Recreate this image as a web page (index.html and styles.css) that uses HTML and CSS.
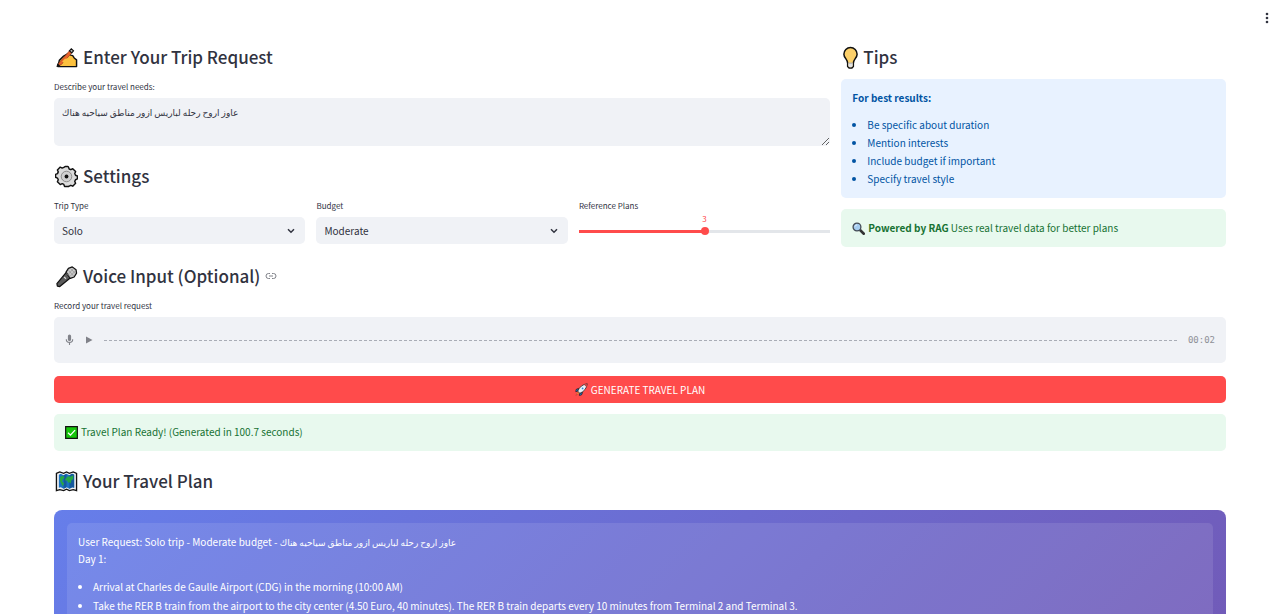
FILE: index.html
```html
<!DOCTYPE html>
<html lang="en">
<head>
<meta charset="utf-8">
<meta name="viewport" content="width=device-width, initial-scale=1">
<title>Travel Planner</title>
<link rel="stylesheet" href="styles.css">
</head>
<body>
<header class="topbar">
  <button class="menu-button" type="button" aria-label="Main menu">
    <svg class="menu-icon" viewBox="0 0 4 12"><circle cx="2" cy="2" r="1.3"/><circle cx="2" cy="6" r="1.3"/><circle cx="2" cy="10" r="1.3"/></svg>
  </button>
</header>
<main class="page">
  <div class="columns">
    <section class="request">
      <h2 class="heading">
        <svg class="emoji" viewBox="0 0 24 24"><path d="M3 21.500 4.500 15 9 10.500 13.500 8l3 1.500 2 .5 1.500 2.500 2.500 2v7z" fill="#fcc13e" stroke="#111" stroke-width="1.500" stroke-linejoin="round"/><path d="M3.500 18.500 15 5l2.500 2.200L6.500 19.500l-3.500 1z" fill="#e8622c" stroke="#8a3a1c" stroke-width=".6"/><path d="m15 5 2-2 2.300 2-1.800 2.200z" fill="#bbb" stroke="#111" stroke-width="1.200"/><path d="m1.500 22 1-4 3.500 3z" fill="#111"/><path d="M8.500 17q3-4 6-2.500" fill="none" stroke="#fcc13e" stroke-width="2.600"/></svg>
        Enter Your Trip Request
      </h2>
      <label class="label" for="needs">Describe your travel needs:</label>
      <textarea class="textarea arabic" id="needs">عاوز اروح رحله لباريس ازور مناطق سياحيه هناك</textarea>

      <h2 class="heading">
        <svg class="emoji" viewBox="0 0 24 24"><path d="m10 2 1-.5h2l1 .5.800 2.200 1.700.700 2-1 3 3-.9 2 .8 1.800 2 .8v3l-2 .9-.8 1.700.9 2-3 3-2-.9-1.700.8L14 22.500h-4l-.8-2.200-1.700-.8-2 .9-3-3 .9-2-.8-1.700-2-.9v-3l2-.8.8-1.800-.9-2 3-3 2 1 1.700-.7z" fill="#dcdcdc" stroke="#111" stroke-width="1.500" stroke-linejoin="round"/><circle cx="12" cy="12" r="5.500" fill="#d0d0d0" stroke="#777" stroke-width=".8"/><circle cx="12" cy="12" r="2" fill="#111"/></svg>
        Settings
      </h2>
      <div class="settings">
        <div class="field">
          <label class="label" for="trip">Trip Type</label>
          <div class="select-wrap">
            <select class="select" id="trip"><option>Solo</option></select>
            <svg class="chevron" viewBox="0 0 8 6"><path d="m1 1.200 3 3 3-3"/></svg>
          </div>
        </div>
        <div class="field">
          <label class="label" for="budget">Budget</label>
          <div class="select-wrap">
            <select class="select" id="budget"><option>Moderate</option></select>
            <svg class="chevron" viewBox="0 0 8 6"><path d="m1 1.200 3 3 3-3"/></svg>
          </div>
        </div>
        <div class="field">
          <label class="label" for="plans">Reference Plans</label>
          <output class="slider-value" for="plans">3</output>
          <input class="slider" id="plans" type="range" min="1" max="5" value="3">
        </div>
      </div>
    </section>

    <aside class="tips">
      <h2 class="heading tips-heading">
        <svg class="emoji bulb" viewBox="0 0 18 24"><path d="M9 1.500A7 7 0 0 0 2 8.500c0 4 4 5.500 4 9.500v3.500l1.500 1.500h3l1.500-1.500V18c0-4 4-5.500 4-9.500a7 7 0 0 0-7-7z" fill="#fcd06a" stroke="#111" stroke-width="1.600"/><path d="M6.700 17.500h4.600v3.700l-1.300 1H8l-1.300-1z" fill="#e4e4e4"/><path d="M6.700 18h4.600" stroke="#999" stroke-width=".8"/></svg>
        Tips
      </h2>
      <div class="notice info">
        <p class="notice-title">For best results:</p>
        <ul class="tip-list">
          <li>Be specific about duration</li>
          <li>Mention interests</li>
          <li>Include budget if important</li>
          <li>Specify travel style</li>
        </ul>
      </div>
      <div class="notice success">
        <svg class="emoji-small" viewBox="0 0 12 12"><path d="m7.200 7.200 3.700 3.600" stroke="#333" stroke-width="2.400" stroke-linecap="round"/><circle cx="4.600" cy="4.600" r="3.600" fill="#a5cdf0" stroke="#444b55" stroke-width="1.200"/><path d="M2.800 4.200q.4-1.400 1.700-1.500" stroke="#fff" stroke-width=".7" fill="none"/></svg>
        <p><strong>Powered by RAG</strong> Uses real travel data for better plans</p>
      </div>
    </aside>
  </div>

  <section class="voice" id="voice">
    <h2 class="heading">
      <svg class="emoji" viewBox="0 0 24 24"><path d="M11.500 8 2 19.500l.5 2.500 2.500.500L16.500 13z" fill="#5b5b5b" stroke="#111" stroke-width="1.300" stroke-linejoin="round"/><path d="M11.500 7.500 14 3.500 18 2l4 3 .5 3.500-2.500 4-4 1.500z" fill="#c9c9c9" stroke="#111" stroke-width="1.300" stroke-linejoin="round"/><path d="m11.500 8 5 5.500M14 5.500l5.500 6M16.500 3.800l4.500 5M13 10.500l6.500-7M15.500 12l6-6" stroke="#888" stroke-width=".6"/><path d="m9.500 12.500 2 1.800" stroke="#ddd" stroke-width="1.200"/></svg>
      Voice Input (Optional)
      <a class="anchor" href="#voice" aria-label="Link to heading"><svg class="anchor-icon" viewBox="0 0 12 8"><path d="M5 1.500H3.500a2.500 2.500 0 0 0 0 5H5M7 1.500h1.500a2.500 2.500 0 0 1 0 5H7M4 4h4"/></svg></a>
    </h2>
    <p class="label">Record your travel request</p>
    <div class="recorder">
      <button class="icon-button" type="button" aria-label="Record"><svg class="mic" viewBox="0 0 8 12"><rect x="2.400" y=".5" width="3.200" height="6.500" rx="1.600" fill="#808289"/><path d="M.8 5.200a3.200 3.200 0 0 0 6.400 0M4 8.500V11" fill="none" stroke="#808289" stroke-width="1.100"/></svg></button>
      <button class="icon-button" type="button" aria-label="Play"><svg class="play" viewBox="0 0 8 8"><path d="M1 .5v7L7.500 4z" fill="#808289"/></svg></button>
      <span class="wave"></span>
      <time class="duration">00:02</time>
    </div>
  </section>

  <button class="generate" type="button">
    <svg class="emoji-small" viewBox="0 0 12 12"><path d="M3.200 5 1 6l-.3 2 2-.5zM7 8.800 6 11l-2 .5.500-2.200z" fill="#2784d8" stroke="#111" stroke-width=".6"/><path d="M2.800 8 .8 11.400 4.200 9.400z" fill="#ffb02e" stroke="#b33" stroke-width=".5"/><path d="M2.500 7.500Q5 1.500 11.300.7 10.500 7 4.500 9.500z" fill="#e9f1f7" stroke="#222" stroke-width=".7"/><path d="M8.300 1.600 11.300.7l-.8 3z" fill="#d33a3a"/><circle cx="7" cy="5" r=".8" fill="#2784d8"/></svg>
    GENERATE TRAVEL PLAN
  </button>

  <div class="notice success ready" role="status">
    <svg class="emoji-small" viewBox="0 0 12 12"><path d="M.6.600h10.800v10.800H.6z" fill="#16c60c" stroke="#111" stroke-width="1.100"/><path d="m2.800 6.200 2.200 2.200 4.300-4.600" fill="none" stroke="#fff" stroke-width="1.200"/></svg>
    <p>Travel Plan Ready! (Generated in 100.7 seconds)</p>
  </div>

  <section class="result">
    <h2 class="heading result-heading">
      <svg class="emoji" viewBox="0 0 24 24"><path d="M1.500 3.500 5 2l4 1.500L12 2l3 1.500L19 2l3.500 1.500v18L19 20.500l-4 1-3-1.500-3 1.500-4-1-3.500 1z" fill="#f5f5f5" stroke="#111" stroke-width="1.400"/><path d="m4 5 2-1 3 1.500L12 4l3 1.500L18 4l2 1v13.500l-2-.5-3 1.500-3-1.500-3 1.500L6 18l-2 .5z" fill="#1b73c4"/><path d="M9 5.500 12 4v14l-3 1.500zM15 5.500 18 4l2 1v13.500l-2-.5-3 1.500z" fill="#145a9e"/><path d="m5.500 7 3-1 1.500 2-2 2-.5 2 2 2-1.500 3-1.500-3-1.500-3zM11 9l2.500-2.500 2.500.5 3-1.500v4l-2 1.500-.5 3-1.500-1.500-1 1-1.500-2.500-2 0z" fill="#27a844"/></svg>
      Your Travel Plan
    </h2>
    <article class="plan">
      <div class="plan-body">
        <p>User Request: Solo trip - Moderate budget - <span class="arabic">عاوز اروح رحله لباريس ازور مناطق سياحيه هناك</span></p>
        <p>Day 1:</p>
        <ul class="plan-list">
          <li>Arrival at Charles de Gaulle Airport (CDG) in the morning (10:00 AM)</li>
          <li>Take the RER B train from the airport to the city center (4.50 Euro, 40 minutes). The RER B train departs every 10 minutes from Terminal 2 and Terminal 3.</li>
        </ul>
      </div>
    </article>
  </section>
</main>
</body>
</html>
```

FILE: styles.css
```css
* {
  box-sizing: border-box;
}

body {
  margin: 0;
  height: 100vh;
  overflow: hidden;
  background: #fff;
  color: #31333f;
  font-family: "Noto Sans CJK SC", "DejaVu Sans", sans-serif;
  font-size: 10px;
  line-height: 18px;
}

p,
ul {
  margin: 0;
  padding: 0;
}

button,
select,
textarea {
  font: inherit;
  color: inherit;
}

button {
  border: 0;
  padding: 0;
  background: none;
}

svg {
  display: block;
  flex: none;
}

.arabic {
  font-size: 9px;
}

.topbar {
  display: flex;
  justify-content: flex-end;
  align-items: flex-end;
  height: 24px;
  padding-right: 11px;
}

.menu-icon {
  width: 4px;
  height: 12px;
  fill: #31333f;
}

.page {
  padding: 21px 54px 0;
}

.columns {
  display: grid;
  grid-template-columns: calc(66.667% - 5px) minmax(0, 1fr);
  gap: 11px;
}

.heading {
  display: flex;
  align-items: center;
  gap: 5px;
  margin: 0 0 12px;
  padding-left: 1px;
  font-size: 17px;
  font-weight: 500;
  line-height: 24px;
}

.emoji {
  width: 23px;
  height: 23px;
}

.bulb {
  width: 17px;
}

.tips-heading {
  gap: 4px;
  margin-bottom: 10px;
}

.result-heading {
  margin-bottom: 17px;
}

.label {
  display: block;
  margin-bottom: 5px;
  font-size: 8px;
  line-height: 12px;
}

.textarea {
  display: block;
  width: 100%;
  height: 48px;
  margin-bottom: 18px;
  padding: 6px 8px;
  border: 0;
  border-radius: 5px;
  background: #f0f2f6;
}

.settings {
  display: grid;
  grid-template-columns: repeat(3, minmax(0, 1fr));
  gap: 11px;
}

.select-wrap {
  display: grid;
  align-items: center;
}

.select {
  grid-area: 1 / 1;
  width: 100%;
  height: 27px;
  padding: 0 8px;
  border: 0;
  border-radius: 5px;
  background: #f0f2f6;
  appearance: none;
}

.chevron {
  grid-area: 1 / 1;
  justify-self: end;
  width: 8px;
  height: 6px;
  margin-right: 10px;
  fill: none;
  stroke: #31333f;
  stroke-width: 1.500;
  pointer-events: none;
}

.field .slider-value {
  display: block;
  height: 10px;
  margin-top: -4px;
  color: #ff4b4b;
  font-size: 8px;
  line-height: 12px;
  text-align: center;
}

.slider {
  display: block;
  width: 100%;
  height: 8px;
  margin: 4px 0 0;
  background: linear-gradient(90deg, #ff4b4b 50%, #e3e6ea 50%) center / 100% 3px no-repeat;
  appearance: none;
}

.slider::-webkit-slider-thumb {
  width: 8px;
  height: 8px;
  border-radius: 50%;
  background: #ff4b4b;
  appearance: none;
}

.notice {
  padding: 10px 11px;
  border-radius: 5px;
}

.info {
  margin-bottom: 11px;
  background: #e8f2ff;
  color: #0054a3;
}

.notice-title {
  margin-bottom: 9px;
  font-weight: 700;
}

.tip-list,
.plan-list {
  padding-left: 15px;
}

.success {
  display: flex;
  align-items: center;
  gap: 3px;
  background: #e8f9ee;
  color: #177233;
}

.emoji-small {
  width: 13px;
  height: 13px;
}

.voice {
  margin-top: 17px;
}

.anchor {
  color: #808289;
}

.anchor-icon {
  width: 12px;
  height: 8px;
  fill: none;
  stroke: currentColor;
}

.recorder {
  display: flex;
  align-items: center;
  gap: 11px;
  height: 46px;
  padding: 0 11px;
  border-radius: 5px;
  background: #f0f2f6;
}

.mic {
  width: 9px;
  height: 12px;
}

.play {
  width: 8px;
  height: 8px;
}

.wave {
  flex: 1;
  height: 1px;
  background: repeating-linear-gradient(90deg, #a9adb6 0 3px, transparent 3px 5px);
}

.duration {
  color: #8e9096;
  font-family: "DejaVu Sans Mono", monospace;
  font-size: 9px;
}

.generate {
  display: flex;
  align-items: center;
  justify-content: center;
  gap: 3px;
  width: 100%;
  height: 27px;
  margin: 13px 0 11px;
  border-radius: 5px;
  background: #ff4b4b;
  color: #fff;
}

.ready {
  margin-bottom: 18px;
  padding-top: 9px;
}

.plan {
  min-height: 700px;
  padding: 13px;
  border-radius: 8px;
  background: linear-gradient(135deg, #667eea 0%, #764ba2 100%);
  color: #fff;
}

.plan-body {
  min-height: 674px;
  padding: 10px 11px;
  border-radius: 5px;
  background: rgba(255, 255, 255, 0.1);
  line-height: 17px;
}

.plan-body .arabic {
  line-height: 1;
}

.plan-list {
  margin-top: 10px;
  line-height: 19px;
}
```
